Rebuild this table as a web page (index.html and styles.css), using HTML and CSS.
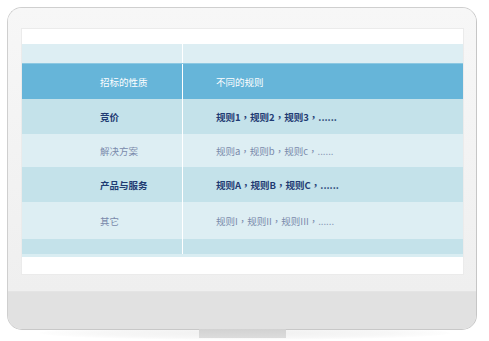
FILE: index.html
```html
<!DOCTYPE html>
<html lang="zh-CN">
<head>
<meta charset="utf-8">
<link rel="stylesheet" href="styles.css">
</head>
<body>
<div class="stage">
  <div class="monitor">
    <div class="bezel">
      <div class="screen">
        <div class="top-strip"></div>
        <div class="table">
          <div class="row row-spacer light"><div class="c1"></div><div class="c2"></div></div>
          <div class="row row-head"><div class="c1">招标的性质</div><div class="c2">不同的规则</div></div>
          <div class="row r35 dark strong"><div class="c1">竞价</div><div class="c2" lang="zh-TW">规则1，规则2，规则3，......</div></div>
          <div class="row r33 light soft"><div class="c1">解决方案</div><div class="c2" lang="zh-TW">规则a，规则b，规则c，......</div></div>
          <div class="row r35 dark strong"><div class="c1">产品与服务</div><div class="c2" lang="zh-TW">规则A，规则B，规则C，......</div></div>
          <div class="row r37 light soft"><div class="c1">其它</div><div class="c2" lang="zh-TW">规则I，规则II，规则III，......</div></div>
          <div class="row row-end dark"><div class="c1"></div><div class="c2"></div></div>
        </div>
        <div class="bottom-line"></div>
      </div>
    </div>
    <div class="chin"></div>
  </div>
  <div class="stand"></div>
  <div class="floor"></div>
</div>
</body>
</html>
```

FILE: styles.css
```css
* { box-sizing: border-box; }
html, body { margin: 0; padding: 0; background: #ffffff; }
body {
  width: 489px;
  height: 341px;
  overflow: hidden;
  font-family: "Noto Sans CJK SC", "Noto Sans", sans-serif;
}
.stage {
  position: relative;
  padding: 7px 12px 0 7px;
  display: flex;
  flex-direction: column;
  align-items: center;
}
.monitor {
  width: 470px;
  height: 323px;
  border: 1px solid #cfcfcf;
  border-right-color: #c6c6c6;
  border-bottom-color: #c8c8c8;
  border-radius: 15px;
  overflow: hidden;
  display: flex;
  flex-direction: column;
  background: #f5f5f5;
  position: relative;
  z-index: 1;
}
.bezel {
  flex: 0 0 283px;
  padding: 21px 13px 0 14px;
  background: linear-gradient(#f7f7f7, #efefef);
}
.screen {
  height: 245px;
  background: #ffffff;
  outline: 1px solid #ebebeb;
  display: flex;
  flex-direction: column;
}
.top-strip { height: 15px; background: #ffffff; }
.table { display: flex; flex-direction: column; }
.row { display: flex; }
.row .c1 {
  width: 161px;
  padding-left: 78px;
  border-right: 1px solid #ffffff;
  display: flex;
  align-items: center;
}
.row .c2 {
  flex: 1;
  padding-left: 33px;
  display: flex;
  align-items: center;
}
.row .c2:lang(zh-TW) {
  font-family: "Noto Sans CJK TC", "Noto Sans CJK SC", sans-serif;
}
.row-spacer { height: 19px; }
.row-head { height: 36px; background: #66b5d9; color: #ffffff; font-size: 9.5px; border-top: 1px solid #8cc8e2; }
.r35 { height: 35px; }
.r33 { height: 33px; }
.r37 { height: 37px; }
.row-end { height: 15px; }
.light { background: #ddeef3; }
.dark { background: #c4e2ea; }
.strong { color: #1f3b73; font-weight: 700; font-size: 9.5px; }
.soft { color: #7a8aab; font-size: 9.5px; }
.bottom-line { height: 3px; background: #d9edf2; }
.chin {
  flex: 1;
  background: #e1e1e1;
  border-top: 1px solid #e4e4e4;
}
.stand {
  width: 87px;
  height: 9px;
  background: linear-gradient(#d2d2d2, #dcdcdc);
  margin-top: -1px;
  position: relative;
  z-index: 1;
}
.floor {
  position: absolute;
  left: 40px;
  top: 326px;
  width: 410px;
  height: 14px;
  border-radius: 50%;
  background: radial-gradient(ellipse at center, #f0f0f0 0%, #f7f7f7 50%, rgba(255,255,255,0) 75%);
  z-index: 0;
}
```
